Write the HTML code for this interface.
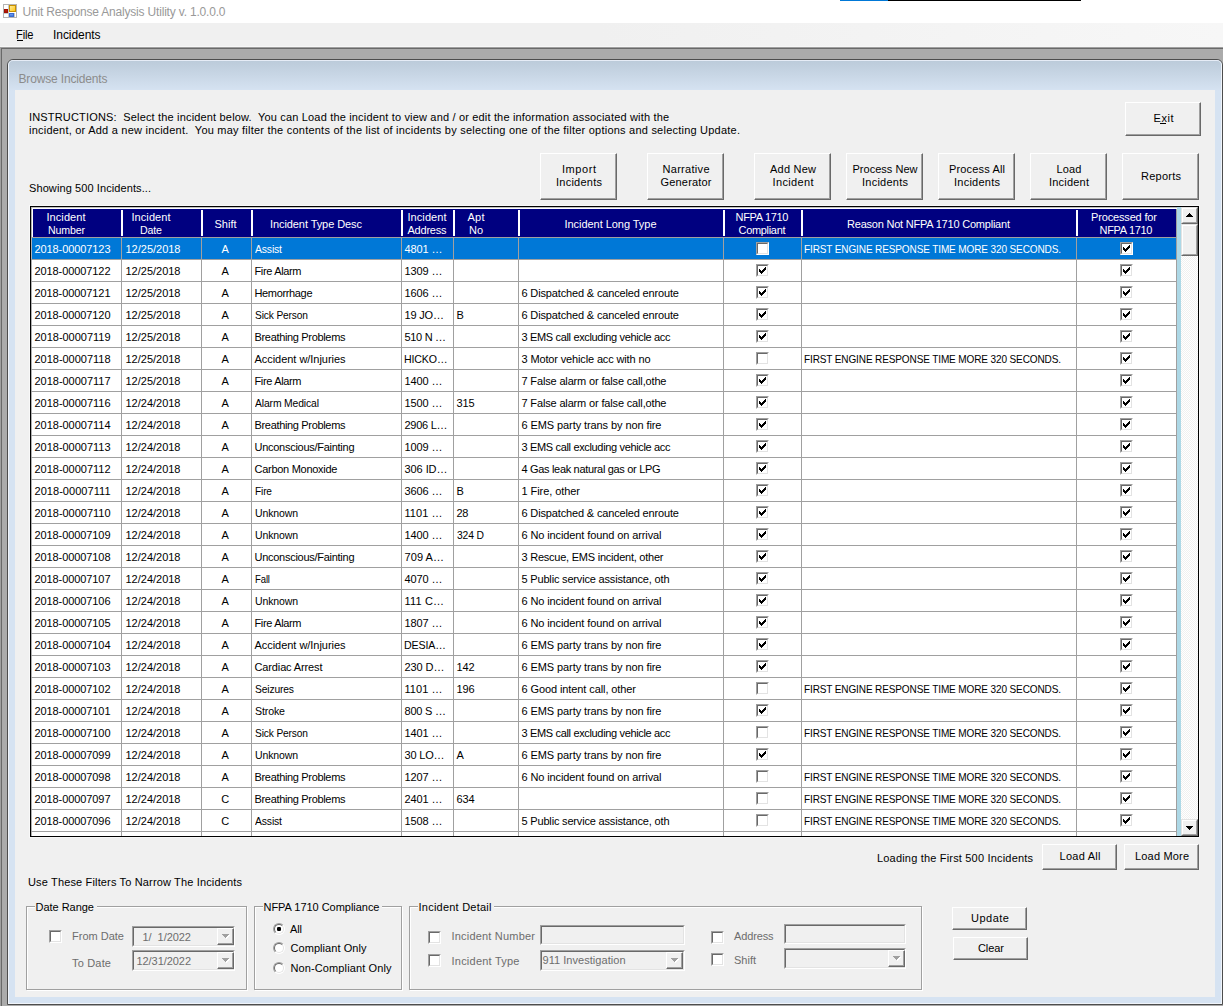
<!DOCTYPE html>
<html><head><meta charset="utf-8"><title>Unit Response Analysis Utility</title><style>
html,body{margin:0;padding:0}
body{width:1223px;height:1006px;position:relative;overflow:hidden;background:#ababab;font-family:"Liberation Sans",sans-serif;font-size:11px}
div,span,i{position:absolute;display:block}
.t{white-space:pre}
.cb{width:13px;height:13px;box-sizing:border-box;background:#fff;border-top:1px solid #a0a0a0;border-left:1px solid #a0a0a0;border-right:1px solid #fff;border-bottom:1px solid #fff}
.cb:before{content:"";position:absolute;left:0;top:0;width:9px;height:9px;border-top:1px solid #696969;border-left:1px solid #696969;border-right:1px solid #e3e3e3;border-bottom:1px solid #e3e3e3}
.ck{left:2px;top:2px;width:7px;height:7px;background:#000;clip-path:polygon(0 2px,1px 2px,1px 3px,2px 3px,2px 4px,3px 4px,3px 3px,4px 3px,4px 2px,5px 2px,5px 1px,6px 1px,6px 0,7px 0,7px 3px,6px 3px,6px 4px,5px 4px,5px 5px,4px 5px,4px 6px,3px 6px,3px 7px,2px 7px,2px 6px,1px 6px,1px 5px,0 5px)}
.rb{width:12px;height:12px;box-sizing:border-box;border-radius:50%;background:#fff;border:1px solid #a0a0a0;border-right-color:#fff;border-bottom-color:#fff}
.rb:before{content:"";position:absolute;left:0;top:0;width:8px;height:8px;border-radius:50%;border:1px solid #696969;border-right-color:#e3e3e3;border-bottom-color:#e3e3e3}
.rb i{left:3px;top:3px;width:4px;height:4px;background:#000;border-radius:1.2px}
</style></head>
<body>
<div style="left:0px;top:0px;width:1223px;height:23px;background:#fff"></div>
<div style="left:840px;top:0px;width:48px;height:1px;background:#0078d7"></div>
<div style="left:888px;top:0px;width:193px;height:1px;background:#000"></div>
<div style="left:3px;top:4px;width:14px;height:14px;background:#fff;border:1px solid #b4b4b4;box-sizing:border-box"></div>
<div style="left:4px;top:9px;width:4px;height:5px;background:linear-gradient(#d02010,#8a0a00);box-shadow:inset 0 0 0 1px #a01000"></div>
<div style="left:9px;top:5px;width:7px;height:7px;background:linear-gradient(135deg,#fff3b0,#ffc000);box-shadow:inset 0 0 0 1px #c89000"></div>
<div style="left:9px;top:13px;width:5px;height:4px;background:linear-gradient(#8ab4f8,#2a62d0);box-shadow:inset 0 0 0 1px #3a6ad0"></div>
<div style="left:8px;top:5px;width:1px;height:12px;background:#c8c8c8"></div>
<div style="left:4px;top:13px;width:5px;height:1px;background:#c8c8c8"></div>
<div style="left:14px;top:13px;width:1px;height:4px;background:#c8c8c8"></div>
<div style="left:0px;top:23px;width:1223px;height:24px;background:#f0f0f0"></div>
<div style="left:0px;top:23px;width:1223px;height:23px;background:linear-gradient(90deg,#f0f0f0 600px,#f7f7f7 1223px)"></div>
<div style="left:0px;top:46px;width:1223px;height:1px;background:#f7f7f7"></div>
<div style="left:17px;top:40px;width:6px;height:1px;background:#000"></div>
<div style="left:0px;top:47px;width:1223px;height:959px;background:#ababab"></div>
<div style="left:0px;top:47px;width:1223px;height:1px;background:#a0a0a0"></div>
<div style="left:0px;top:47px;width:1px;height:959px;background:#a0a0a0"></div>
<div style="left:1px;top:48px;width:1222px;height:1px;background:#696969"></div>
<div style="left:1px;top:48px;width:1px;height:958px;background:#696969"></div>
<div style="left:7px;top:59px;width:1216px;height:946px;box-sizing:border-box;border:1px solid #4d4d4d;border-radius:6px 6px 0 0;background:#d6e3f2;overflow:hidden"><div style="left:0;top:0;width:1214px;height:944px;box-sizing:border-box;border:1px solid #f0f4fa;border-top-color:#e6ecf6;border-radius:5px 5px 0 0;background:linear-gradient(#bccbda 0,#d6e3f2 30px,#d6e3f2 100%)"></div></div>
<div style="left:15px;top:90px;width:1200px;height:907px;background:#f0f0f0"></div>
<div style="left:1125px;top:102px;width:76px;height:34px;box-sizing:border-box;background:#f0f0f0;border-top:1px solid #fff;border-left:1px solid #fff;border-right:1px solid #696969;border-bottom:1px solid #696969"><div style="left:0;top:0;width:73px;height:31px;border-right:1px solid #a0a0a0;border-bottom:1px solid #a0a0a0"></div></div>
<div style="left:1160px;top:123px;width:6px;height:1px;background:#000"></div>
<div style="left:540px;top:153px;width:77px;height:47px;box-sizing:border-box;background:#f0f0f0;border-top:1px solid #fff;border-left:1px solid #fff;border-right:1px solid #696969;border-bottom:1px solid #696969"><div style="left:0;top:0;width:74px;height:44px;border-right:1px solid #a0a0a0;border-bottom:1px solid #a0a0a0"></div></div>
<div style="left:647px;top:153px;width:77px;height:47px;box-sizing:border-box;background:#f0f0f0;border-top:1px solid #fff;border-left:1px solid #fff;border-right:1px solid #696969;border-bottom:1px solid #696969"><div style="left:0;top:0;width:74px;height:44px;border-right:1px solid #a0a0a0;border-bottom:1px solid #a0a0a0"></div></div>
<div style="left:754px;top:153px;width:77px;height:47px;box-sizing:border-box;background:#f0f0f0;border-top:1px solid #fff;border-left:1px solid #fff;border-right:1px solid #696969;border-bottom:1px solid #696969"><div style="left:0;top:0;width:74px;height:44px;border-right:1px solid #a0a0a0;border-bottom:1px solid #a0a0a0"></div></div>
<div style="left:846px;top:153px;width:77px;height:47px;box-sizing:border-box;background:#f0f0f0;border-top:1px solid #fff;border-left:1px solid #fff;border-right:1px solid #696969;border-bottom:1px solid #696969"><div style="left:0;top:0;width:74px;height:44px;border-right:1px solid #a0a0a0;border-bottom:1px solid #a0a0a0"></div></div>
<div style="left:938px;top:153px;width:77px;height:47px;box-sizing:border-box;background:#f0f0f0;border-top:1px solid #fff;border-left:1px solid #fff;border-right:1px solid #696969;border-bottom:1px solid #696969"><div style="left:0;top:0;width:74px;height:44px;border-right:1px solid #a0a0a0;border-bottom:1px solid #a0a0a0"></div></div>
<div style="left:1030px;top:153px;width:77px;height:47px;box-sizing:border-box;background:#f0f0f0;border-top:1px solid #fff;border-left:1px solid #fff;border-right:1px solid #696969;border-bottom:1px solid #696969"><div style="left:0;top:0;width:74px;height:44px;border-right:1px solid #a0a0a0;border-bottom:1px solid #a0a0a0"></div></div>
<div style="left:1122px;top:153px;width:77px;height:47px;box-sizing:border-box;background:#f0f0f0;border-top:1px solid #fff;border-left:1px solid #fff;border-right:1px solid #696969;border-bottom:1px solid #696969"><div style="left:0;top:0;width:74px;height:44px;border-right:1px solid #a0a0a0;border-bottom:1px solid #a0a0a0"></div></div>
<div style="left:29px;top:205px;width:1171px;height:633px;background:#f8f8f8"></div>
<div style="left:30px;top:206px;width:1169px;height:631px;background:#000"></div>
<div style="left:31px;top:207px;width:1167px;height:629px;background:#add8e6"></div>
<div style="left:31px;top:207px;width:1146px;height:629px;background:#fff"></div>
<div style="left:31px;top:207px;width:1146px;height:1px;background:#c0c0c0"></div>
<div style="left:31px;top:207px;width:1px;height:629px;background:#b0b0b0"></div>
<div style="left:33px;top:209px;width:1143px;height:28px;background:#000080"></div>
<div style="left:1176px;top:209px;width:1px;height:627px;background:#a0a0a0"></div>
<div style="left:121px;top:210px;width:2px;height:26px;background:#fff"></div>
<div style="left:201px;top:210px;width:2px;height:26px;background:#fff"></div>
<div style="left:251px;top:210px;width:2px;height:26px;background:#fff"></div>
<div style="left:401px;top:210px;width:2px;height:26px;background:#fff"></div>
<div style="left:453px;top:210px;width:2px;height:26px;background:#fff"></div>
<div style="left:518px;top:210px;width:2px;height:26px;background:#fff"></div>
<div style="left:723px;top:210px;width:2px;height:26px;background:#fff"></div>
<div style="left:801px;top:210px;width:2px;height:26px;background:#fff"></div>
<div style="left:1076px;top:210px;width:2px;height:26px;background:#fff"></div>
<div style="left:32px;top:238px;width:1144px;height:21px;background:#0078d7"></div>
<div style="left:31px;top:259px;width:1145px;height:1px;background:#a0a0a0"></div>
<div class="cb" style="left:756px;top:242px"></div>
<div class="cb" style="left:1120px;top:242px"><i class="ck"></i></div>
<div style="left:31px;top:281px;width:1145px;height:1px;background:#a0a0a0"></div>
<div class="cb" style="left:756px;top:264px"><i class="ck"></i></div>
<div class="cb" style="left:1120px;top:264px"><i class="ck"></i></div>
<div style="left:31px;top:303px;width:1145px;height:1px;background:#a0a0a0"></div>
<div class="cb" style="left:756px;top:286px"><i class="ck"></i></div>
<div class="cb" style="left:1120px;top:286px"><i class="ck"></i></div>
<div style="left:31px;top:325px;width:1145px;height:1px;background:#a0a0a0"></div>
<div class="cb" style="left:756px;top:308px"><i class="ck"></i></div>
<div class="cb" style="left:1120px;top:308px"><i class="ck"></i></div>
<div style="left:31px;top:347px;width:1145px;height:1px;background:#a0a0a0"></div>
<div class="cb" style="left:756px;top:330px"><i class="ck"></i></div>
<div class="cb" style="left:1120px;top:330px"><i class="ck"></i></div>
<div style="left:31px;top:369px;width:1145px;height:1px;background:#a0a0a0"></div>
<div class="cb" style="left:756px;top:352px"></div>
<div class="cb" style="left:1120px;top:352px"><i class="ck"></i></div>
<div style="left:31px;top:391px;width:1145px;height:1px;background:#a0a0a0"></div>
<div class="cb" style="left:756px;top:374px"><i class="ck"></i></div>
<div class="cb" style="left:1120px;top:374px"><i class="ck"></i></div>
<div style="left:31px;top:413px;width:1145px;height:1px;background:#a0a0a0"></div>
<div class="cb" style="left:756px;top:396px"><i class="ck"></i></div>
<div class="cb" style="left:1120px;top:396px"><i class="ck"></i></div>
<div style="left:31px;top:435px;width:1145px;height:1px;background:#a0a0a0"></div>
<div class="cb" style="left:756px;top:418px"><i class="ck"></i></div>
<div class="cb" style="left:1120px;top:418px"><i class="ck"></i></div>
<div style="left:31px;top:457px;width:1145px;height:1px;background:#a0a0a0"></div>
<div class="cb" style="left:756px;top:440px"><i class="ck"></i></div>
<div class="cb" style="left:1120px;top:440px"><i class="ck"></i></div>
<div style="left:31px;top:479px;width:1145px;height:1px;background:#a0a0a0"></div>
<div class="cb" style="left:756px;top:462px"><i class="ck"></i></div>
<div class="cb" style="left:1120px;top:462px"><i class="ck"></i></div>
<div style="left:31px;top:501px;width:1145px;height:1px;background:#a0a0a0"></div>
<div class="cb" style="left:756px;top:484px"><i class="ck"></i></div>
<div class="cb" style="left:1120px;top:484px"><i class="ck"></i></div>
<div style="left:31px;top:523px;width:1145px;height:1px;background:#a0a0a0"></div>
<div class="cb" style="left:756px;top:506px"><i class="ck"></i></div>
<div class="cb" style="left:1120px;top:506px"><i class="ck"></i></div>
<div style="left:31px;top:545px;width:1145px;height:1px;background:#a0a0a0"></div>
<div class="cb" style="left:756px;top:528px"><i class="ck"></i></div>
<div class="cb" style="left:1120px;top:528px"><i class="ck"></i></div>
<div style="left:31px;top:567px;width:1145px;height:1px;background:#a0a0a0"></div>
<div class="cb" style="left:756px;top:550px"><i class="ck"></i></div>
<div class="cb" style="left:1120px;top:550px"><i class="ck"></i></div>
<div style="left:31px;top:589px;width:1145px;height:1px;background:#a0a0a0"></div>
<div class="cb" style="left:756px;top:572px"><i class="ck"></i></div>
<div class="cb" style="left:1120px;top:572px"><i class="ck"></i></div>
<div style="left:31px;top:611px;width:1145px;height:1px;background:#a0a0a0"></div>
<div class="cb" style="left:756px;top:594px"><i class="ck"></i></div>
<div class="cb" style="left:1120px;top:594px"><i class="ck"></i></div>
<div style="left:31px;top:633px;width:1145px;height:1px;background:#a0a0a0"></div>
<div class="cb" style="left:756px;top:616px"><i class="ck"></i></div>
<div class="cb" style="left:1120px;top:616px"><i class="ck"></i></div>
<div style="left:31px;top:655px;width:1145px;height:1px;background:#a0a0a0"></div>
<div class="cb" style="left:756px;top:638px"><i class="ck"></i></div>
<div class="cb" style="left:1120px;top:638px"><i class="ck"></i></div>
<div style="left:31px;top:677px;width:1145px;height:1px;background:#a0a0a0"></div>
<div class="cb" style="left:756px;top:660px"><i class="ck"></i></div>
<div class="cb" style="left:1120px;top:660px"><i class="ck"></i></div>
<div style="left:31px;top:699px;width:1145px;height:1px;background:#a0a0a0"></div>
<div class="cb" style="left:756px;top:682px"></div>
<div class="cb" style="left:1120px;top:682px"><i class="ck"></i></div>
<div style="left:31px;top:721px;width:1145px;height:1px;background:#a0a0a0"></div>
<div class="cb" style="left:756px;top:704px"><i class="ck"></i></div>
<div class="cb" style="left:1120px;top:704px"><i class="ck"></i></div>
<div style="left:31px;top:743px;width:1145px;height:1px;background:#a0a0a0"></div>
<div class="cb" style="left:756px;top:726px"></div>
<div class="cb" style="left:1120px;top:726px"><i class="ck"></i></div>
<div style="left:31px;top:765px;width:1145px;height:1px;background:#a0a0a0"></div>
<div class="cb" style="left:756px;top:748px"><i class="ck"></i></div>
<div class="cb" style="left:1120px;top:748px"><i class="ck"></i></div>
<div style="left:31px;top:787px;width:1145px;height:1px;background:#a0a0a0"></div>
<div class="cb" style="left:756px;top:770px"></div>
<div class="cb" style="left:1120px;top:770px"><i class="ck"></i></div>
<div style="left:31px;top:809px;width:1145px;height:1px;background:#a0a0a0"></div>
<div class="cb" style="left:756px;top:792px"></div>
<div class="cb" style="left:1120px;top:792px"><i class="ck"></i></div>
<div style="left:31px;top:831px;width:1145px;height:1px;background:#a0a0a0"></div>
<div class="cb" style="left:756px;top:814px"></div>
<div class="cb" style="left:1120px;top:814px"><i class="ck"></i></div>
<div style="left:31px;top:237px;width:1145px;height:1px;background:#a0a0a0"></div>
<div style="left:121px;top:237px;width:1px;height:599px;background:#a0a0a0"></div>
<div style="left:201px;top:237px;width:1px;height:599px;background:#a0a0a0"></div>
<div style="left:251px;top:237px;width:1px;height:599px;background:#a0a0a0"></div>
<div style="left:401px;top:237px;width:1px;height:599px;background:#a0a0a0"></div>
<div style="left:453px;top:237px;width:1px;height:599px;background:#a0a0a0"></div>
<div style="left:518px;top:237px;width:1px;height:599px;background:#a0a0a0"></div>
<div style="left:723px;top:237px;width:1px;height:599px;background:#a0a0a0"></div>
<div style="left:801px;top:237px;width:1px;height:599px;background:#a0a0a0"></div>
<div style="left:1076px;top:237px;width:1px;height:599px;background:#a0a0a0"></div>
<div style="left:1181px;top:207px;width:17px;height:629px;background:repeating-conic-gradient(#fff 0 25%,#f0f0f0 0 50%) 0 0/2px 2px"></div>
<div style="left:1181px;top:207px;width:17px;height:17px;box-sizing:border-box;background:#f0f0f0;border-top:1px solid #e3e3e3;border-left:1px solid #e3e3e3;border-right:1px solid #696969;border-bottom:1px solid #696969"><div style="left:0;top:0;width:13px;height:13px;border-top:1px solid #fff;border-left:1px solid #fff;border-right:1px solid #a0a0a0;border-bottom:1px solid #a0a0a0"></div></div>
<div style="left:1181px;top:224px;width:17px;height:32px;box-sizing:border-box;background:#f0f0f0;border-top:1px solid #e3e3e3;border-left:1px solid #e3e3e3;border-right:1px solid #696969;border-bottom:1px solid #696969"><div style="left:0;top:0;width:13px;height:28px;border-top:1px solid #fff;border-left:1px solid #fff;border-right:1px solid #a0a0a0;border-bottom:1px solid #a0a0a0"></div></div>
<div style="left:1181px;top:819px;width:17px;height:17px;box-sizing:border-box;background:#f0f0f0;border-top:1px solid #e3e3e3;border-left:1px solid #e3e3e3;border-right:1px solid #696969;border-bottom:1px solid #696969"><div style="left:0;top:0;width:13px;height:13px;border-top:1px solid #fff;border-left:1px solid #fff;border-right:1px solid #a0a0a0;border-bottom:1px solid #a0a0a0"></div></div>
<div style="left:1189px;top:213px;width:1px;height:1px;background:#000"></div>
<div style="left:1188px;top:214px;width:3px;height:1px;background:#000"></div>
<div style="left:1187px;top:215px;width:5px;height:1px;background:#000"></div>
<div style="left:1186px;top:216px;width:7px;height:1px;background:#000"></div>
<div style="left:1186px;top:826px;width:7px;height:1px;background:#000"></div>
<div style="left:1187px;top:827px;width:5px;height:1px;background:#000"></div>
<div style="left:1188px;top:828px;width:3px;height:1px;background:#000"></div>
<div style="left:1189px;top:829px;width:1px;height:1px;background:#000"></div>
<div style="left:1042px;top:844px;width:75px;height:26px;box-sizing:border-box;background:#f0f0f0;border-top:1px solid #fff;border-left:1px solid #fff;border-right:1px solid #696969;border-bottom:1px solid #696969"><div style="left:0;top:0;width:72px;height:23px;border-right:1px solid #a0a0a0;border-bottom:1px solid #a0a0a0"></div></div>
<div style="left:1124px;top:844px;width:75px;height:26px;box-sizing:border-box;background:#f0f0f0;border-top:1px solid #fff;border-left:1px solid #fff;border-right:1px solid #696969;border-bottom:1px solid #696969"><div style="left:0;top:0;width:72px;height:23px;border-right:1px solid #a0a0a0;border-bottom:1px solid #a0a0a0"></div></div>
<div style="left:27px;top:907px;width:221px;height:84px;box-sizing:border-box;border:1px solid #fff"></div>
<div style="left:26px;top:906px;width:221px;height:84px;box-sizing:border-box;border:1px solid #a0a0a0"></div>
<div style="left:35px;top:906px;width:61.5px;height:2px;background:#f0f0f0"></div>
<div style="left:255px;top:907px;width:148px;height:84px;box-sizing:border-box;border:1px solid #fff"></div>
<div style="left:254px;top:906px;width:148px;height:84px;box-sizing:border-box;border:1px solid #a0a0a0"></div>
<div style="left:263px;top:906px;width:119px;height:2px;background:#f0f0f0"></div>
<div style="left:410px;top:907px;width:513px;height:84px;box-sizing:border-box;border:1px solid #fff"></div>
<div style="left:409px;top:906px;width:513px;height:84px;box-sizing:border-box;border:1px solid #a0a0a0"></div>
<div style="left:418px;top:906px;width:76px;height:2px;background:#f0f0f0"></div>
<div class="cb" style="left:49px;top:930px"></div>
<div style="left:132px;top:926px;width:103px;height:21px;box-sizing:border-box;background:#f0f0f0;border-top:1px solid #a0a0a0;border-left:1px solid #a0a0a0;border-right:1px solid #fff;border-bottom:1px solid #fff"><div style="left:0;top:0;width:99px;height:17px;border-top:1px solid #696969;border-left:1px solid #696969;border-right:1px solid #e3e3e3;border-bottom:1px solid #e3e3e3"></div></div>
<div style="left:217px;top:928px;width:17px;height:17px;box-sizing:border-box;background:#f0f0f0;border-top:1px solid #fff;border-left:1px solid #fff;border-right:1px solid #696969;border-bottom:1px solid #696969"><div style="left:0;top:0;width:14px;height:14px;border-right:1px solid #a0a0a0;border-bottom:1px solid #a0a0a0"></div></div>
<div style="left:223px;top:935px;width:7px;height:1px;background:#fff"></div>
<div style="left:224px;top:936px;width:5px;height:1px;background:#fff"></div>
<div style="left:225px;top:937px;width:3px;height:1px;background:#fff"></div>
<div style="left:226px;top:938px;width:1px;height:1px;background:#fff"></div>
<div style="left:222px;top:934px;width:7px;height:1px;background:#a0a0a0"></div>
<div style="left:223px;top:935px;width:5px;height:1px;background:#a0a0a0"></div>
<div style="left:224px;top:936px;width:3px;height:1px;background:#a0a0a0"></div>
<div style="left:225px;top:937px;width:1px;height:1px;background:#a0a0a0"></div>
<div style="left:132px;top:950px;width:103px;height:21px;box-sizing:border-box;background:#f0f0f0;border-top:1px solid #a0a0a0;border-left:1px solid #a0a0a0;border-right:1px solid #fff;border-bottom:1px solid #fff"><div style="left:0;top:0;width:99px;height:17px;border-top:1px solid #696969;border-left:1px solid #696969;border-right:1px solid #e3e3e3;border-bottom:1px solid #e3e3e3"></div></div>
<div style="left:217px;top:952px;width:17px;height:17px;box-sizing:border-box;background:#f0f0f0;border-top:1px solid #fff;border-left:1px solid #fff;border-right:1px solid #696969;border-bottom:1px solid #696969"><div style="left:0;top:0;width:14px;height:14px;border-right:1px solid #a0a0a0;border-bottom:1px solid #a0a0a0"></div></div>
<div style="left:223px;top:959px;width:7px;height:1px;background:#fff"></div>
<div style="left:224px;top:960px;width:5px;height:1px;background:#fff"></div>
<div style="left:225px;top:961px;width:3px;height:1px;background:#fff"></div>
<div style="left:226px;top:962px;width:1px;height:1px;background:#fff"></div>
<div style="left:222px;top:958px;width:7px;height:1px;background:#a0a0a0"></div>
<div style="left:223px;top:959px;width:5px;height:1px;background:#a0a0a0"></div>
<div style="left:224px;top:960px;width:3px;height:1px;background:#a0a0a0"></div>
<div style="left:225px;top:961px;width:1px;height:1px;background:#a0a0a0"></div>
<div class="rb" style="left:273px;top:923px"><i></i></div>
<div class="rb" style="left:273px;top:942px"></div>
<div class="rb" style="left:273px;top:962px"></div>
<div class="cb" style="left:428px;top:931px"></div>
<div style="left:540px;top:925px;width:145px;height:20px;box-sizing:border-box;background:#f0f0f0;border-top:1px solid #a0a0a0;border-left:1px solid #a0a0a0;border-right:1px solid #fff;border-bottom:1px solid #fff"><div style="left:0;top:0;width:141px;height:16px;border-top:1px solid #696969;border-left:1px solid #696969;border-right:1px solid #e3e3e3;border-bottom:1px solid #e3e3e3"></div></div>
<div class="cb" style="left:428px;top:954px"></div>
<div style="left:540px;top:950px;width:145px;height:21px;box-sizing:border-box;background:#f0f0f0;border-top:1px solid #a0a0a0;border-left:1px solid #a0a0a0;border-right:1px solid #fff;border-bottom:1px solid #fff"><div style="left:0;top:0;width:141px;height:17px;border-top:1px solid #696969;border-left:1px solid #696969;border-right:1px solid #e3e3e3;border-bottom:1px solid #e3e3e3"></div></div>
<div style="left:666px;top:952px;width:17px;height:17px;box-sizing:border-box;background:#f0f0f0;border-top:1px solid #fff;border-left:1px solid #fff;border-right:1px solid #696969;border-bottom:1px solid #696969"><div style="left:0;top:0;width:14px;height:14px;border-right:1px solid #a0a0a0;border-bottom:1px solid #a0a0a0"></div></div>
<div style="left:672px;top:959px;width:7px;height:1px;background:#fff"></div>
<div style="left:673px;top:960px;width:5px;height:1px;background:#fff"></div>
<div style="left:674px;top:961px;width:3px;height:1px;background:#fff"></div>
<div style="left:675px;top:962px;width:1px;height:1px;background:#fff"></div>
<div style="left:671px;top:958px;width:7px;height:1px;background:#a0a0a0"></div>
<div style="left:672px;top:959px;width:5px;height:1px;background:#a0a0a0"></div>
<div style="left:673px;top:960px;width:3px;height:1px;background:#a0a0a0"></div>
<div style="left:674px;top:961px;width:1px;height:1px;background:#a0a0a0"></div>
<div class="cb" style="left:711px;top:931px"></div>
<div style="left:784px;top:924px;width:122px;height:20px;box-sizing:border-box;background:#f0f0f0;border-top:1px solid #a0a0a0;border-left:1px solid #a0a0a0;border-right:1px solid #fff;border-bottom:1px solid #fff"><div style="left:0;top:0;width:118px;height:16px;border-top:1px solid #696969;border-left:1px solid #696969;border-right:1px solid #e3e3e3;border-bottom:1px solid #e3e3e3"></div></div>
<div class="cb" style="left:711px;top:953px"></div>
<div style="left:784px;top:948px;width:122px;height:21px;box-sizing:border-box;background:#f0f0f0;border-top:1px solid #a0a0a0;border-left:1px solid #a0a0a0;border-right:1px solid #fff;border-bottom:1px solid #fff"><div style="left:0;top:0;width:118px;height:17px;border-top:1px solid #696969;border-left:1px solid #696969;border-right:1px solid #e3e3e3;border-bottom:1px solid #e3e3e3"></div></div>
<div style="left:888px;top:950px;width:17px;height:17px;box-sizing:border-box;background:#f0f0f0;border-top:1px solid #fff;border-left:1px solid #fff;border-right:1px solid #696969;border-bottom:1px solid #696969"><div style="left:0;top:0;width:14px;height:14px;border-right:1px solid #a0a0a0;border-bottom:1px solid #a0a0a0"></div></div>
<div style="left:894px;top:957px;width:7px;height:1px;background:#fff"></div>
<div style="left:895px;top:958px;width:5px;height:1px;background:#fff"></div>
<div style="left:896px;top:959px;width:3px;height:1px;background:#fff"></div>
<div style="left:897px;top:960px;width:1px;height:1px;background:#fff"></div>
<div style="left:893px;top:956px;width:7px;height:1px;background:#a0a0a0"></div>
<div style="left:894px;top:957px;width:5px;height:1px;background:#a0a0a0"></div>
<div style="left:895px;top:958px;width:3px;height:1px;background:#a0a0a0"></div>
<div style="left:896px;top:959px;width:1px;height:1px;background:#a0a0a0"></div>
<div style="left:952px;top:907px;width:75px;height:23px;box-sizing:border-box;background:#f0f0f0;border-top:1px solid #fff;border-left:1px solid #fff;border-right:1px solid #696969;border-bottom:1px solid #696969"><div style="left:0;top:0;width:72px;height:20px;border-right:1px solid #a0a0a0;border-bottom:1px solid #a0a0a0"></div></div>
<div style="left:953px;top:937px;width:75px;height:23px;box-sizing:border-box;background:#f0f0f0;border-top:1px solid #fff;border-left:1px solid #fff;border-right:1px solid #696969;border-bottom:1px solid #696969"><div style="left:0;top:0;width:72px;height:20px;border-right:1px solid #a0a0a0;border-bottom:1px solid #a0a0a0"></div></div>
<span class="t" style="left:22.50px;top:5px;font-size:12px;line-height:15px;color:#999;letter-spacing:-0.189px;">Unit Response Analysis Utility v. 1.0.0.0</span>
<span class="t" style="left:16.00px;top:28px;font-size:12px;line-height:15px;color:#000;letter-spacing:-0.150px;transform:scaleX(0.9262);transform-origin:0 0;">File</span>
<span class="t" style="left:53.00px;top:28px;font-size:12px;line-height:15px;color:#000;letter-spacing:-0.066px;">Incidents</span>
<span class="t" style="left:18.50px;top:72px;font-size:12px;line-height:15px;color:#8c8c8c;letter-spacing:-0.159px;">Browse Incidents</span>
<span class="t" style="left:29.00px;top:111px;font-size:11px;line-height:13px;color:#000;letter-spacing:0.170px;">INSTRUCTIONS:  Select the incident below.  You can Load the incident to view and / or edit the information associated with the</span>
<span class="t" style="left:29.00px;top:124px;font-size:11px;line-height:13px;color:#000;letter-spacing:0.225px;">incident, or Add a new incident.  You may filter the contents of the list of incidents by selecting one of the filter options and selecting Update.</span>
<span class="t" style="left:29.00px;top:182px;font-size:11px;line-height:13px;color:#000;letter-spacing:0.093px;">Showing 500 Incidents...</span>
<span class="t" style="left:1153.50px;top:112px;font-size:11px;line-height:13px;color:#000;letter-spacing:0.552px;">Exit</span>
<span class="t" style="left:562.00px;top:163px;font-size:11px;line-height:13px;color:#000;letter-spacing:0.562px;">Import</span>
<span class="t" style="left:556.00px;top:176px;font-size:11px;line-height:13px;color:#000;letter-spacing:0.246px;">Incidents</span>
<span class="t" style="left:662.50px;top:163px;font-size:11px;line-height:13px;color:#000;letter-spacing:0.297px;">Narrative</span>
<span class="t" style="left:660.50px;top:176px;font-size:11px;line-height:13px;color:#000;letter-spacing:0.184px;">Generator</span>
<span class="t" style="left:770.00px;top:163px;font-size:11px;line-height:13px;color:#000;letter-spacing:0.227px;">Add New</span>
<span class="t" style="left:772.50px;top:176px;font-size:11px;line-height:13px;color:#000;letter-spacing:0.353px;">Incident</span>
<span class="t" style="left:852.50px;top:163px;font-size:11px;line-height:13px;color:#000;letter-spacing:0.020px;">Process New</span>
<span class="t" style="left:862.00px;top:176px;font-size:11px;line-height:13px;color:#000;letter-spacing:0.246px;">Incidents</span>
<span class="t" style="left:949.00px;top:163px;font-size:11px;line-height:13px;color:#000;letter-spacing:0.158px;">Process All</span>
<span class="t" style="left:954.00px;top:176px;font-size:11px;line-height:13px;color:#000;letter-spacing:0.246px;">Incidents</span>
<span class="t" style="left:1056.50px;top:163px;font-size:11px;line-height:13px;color:#000;letter-spacing:0.172px;">Load</span>
<span class="t" style="left:1049.00px;top:176px;font-size:11px;line-height:13px;color:#000;letter-spacing:0.210px;">Incident</span>
<span class="t" style="left:1141.00px;top:170px;font-size:11px;line-height:13px;color:#000;letter-spacing:0.245px;">Reports</span>
<span class="t" style="left:46.50px;top:211px;font-size:11px;line-height:13px;color:#fff;letter-spacing:0.067px;">Incident</span>
<span class="t" style="left:47.50px;top:224px;font-size:11px;line-height:13px;color:#fff;letter-spacing:-0.150px;transform:scaleX(0.9642);transform-origin:0 0;">Number</span>
<span class="t" style="left:131.50px;top:211px;font-size:11px;line-height:13px;color:#fff;letter-spacing:0.067px;">Incident</span>
<span class="t" style="left:140.00px;top:224px;font-size:11px;line-height:13px;color:#fff;letter-spacing:-0.150px;transform:scaleX(0.9649);transform-origin:0 0;">Date</span>
<span class="t" style="left:214.50px;top:218px;font-size:11px;line-height:13px;color:#fff;">Shift</span>
<span class="t" style="left:270.00px;top:218px;font-size:11px;line-height:13px;color:#fff;letter-spacing:-0.080px;">Incident Type Desc</span>
<span class="t" style="left:407.50px;top:211px;font-size:11px;line-height:13px;color:#fff;letter-spacing:0.067px;">Incident</span>
<span class="t" style="left:407.50px;top:224px;font-size:11px;line-height:13px;color:#fff;letter-spacing:-0.227px;">Address</span>
<span class="t" style="left:467.50px;top:211px;font-size:11px;line-height:13px;color:#fff;letter-spacing:0.242px;">Apt</span>
<span class="t" style="left:469.00px;top:224px;font-size:11px;line-height:13px;color:#fff;letter-spacing:-0.062px;">No</span>
<span class="t" style="left:564.50px;top:218px;font-size:11px;line-height:13px;color:#fff;letter-spacing:-0.045px;">Incident Long Type</span>
<span class="t" style="left:735.50px;top:211px;font-size:11px;line-height:13px;color:#fff;letter-spacing:-0.307px;">NFPA 1710</span>
<span class="t" style="left:738.50px;top:224px;font-size:11px;line-height:13px;color:#fff;letter-spacing:-0.316px;">Compliant</span>
<span class="t" style="left:847.00px;top:218px;font-size:11px;line-height:13px;color:#fff;letter-spacing:-0.213px;">Reason Not NFPA 1710 Compliant</span>
<span class="t" style="left:1091.00px;top:211px;font-size:11px;line-height:13px;color:#fff;letter-spacing:-0.156px;">Processed for</span>
<span class="t" style="left:1099.50px;top:224px;font-size:11px;line-height:13px;color:#fff;letter-spacing:-0.307px;">NFPA 1710</span>
<span class="t" style="left:34.50px;top:243px;font-size:11px;line-height:13px;color:#fff;letter-spacing:-0.090px;">2018-00007123</span>
<span class="t" style="left:125.50px;top:243px;font-size:11px;line-height:13px;color:#fff;letter-spacing:-0.007px;">12/25/2018</span>
<span class="t" style="left:221.53px;top:243px;font-size:11px;line-height:13px;color:#fff;">A</span>
<span class="t" style="left:254.50px;top:243px;font-size:11px;line-height:13px;color:#fff;letter-spacing:-0.150px;transform:scaleX(0.9443);transform-origin:0 0;">Assist</span>
<span class="t" style="left:404.50px;top:243px;font-size:11px;line-height:13px;color:#fff;letter-spacing:-0.106px;">4801 …</span>
<span class="t" style="left:804.00px;top:243px;font-size:11px;line-height:13px;color:#fff;letter-spacing:-0.150px;transform:scaleX(0.9124);transform-origin:0 0;">FIRST ENGINE RESPONSE TIME MORE 320 SECONDS.</span>
<span class="t" style="left:34.50px;top:265px;font-size:11px;line-height:13px;color:#000;letter-spacing:-0.090px;">2018-00007122</span>
<span class="t" style="left:125.50px;top:265px;font-size:11px;line-height:13px;color:#000;letter-spacing:-0.007px;">12/25/2018</span>
<span class="t" style="left:221.53px;top:265px;font-size:11px;line-height:13px;color:#000;">A</span>
<span class="t" style="left:254.50px;top:265px;font-size:11px;line-height:13px;color:#000;letter-spacing:-0.347px;">Fire Alarm</span>
<span class="t" style="left:404.50px;top:265px;font-size:11px;line-height:13px;color:#000;letter-spacing:-0.106px;">1309 …</span>
<span class="t" style="left:34.50px;top:287px;font-size:11px;line-height:13px;color:#000;letter-spacing:-0.090px;">2018-00007121</span>
<span class="t" style="left:125.50px;top:287px;font-size:11px;line-height:13px;color:#000;letter-spacing:-0.007px;">12/25/2018</span>
<span class="t" style="left:221.53px;top:287px;font-size:11px;line-height:13px;color:#000;">A</span>
<span class="t" style="left:254.50px;top:287px;font-size:11px;line-height:13px;color:#000;letter-spacing:-0.349px;">Hemorrhage</span>
<span class="t" style="left:404.50px;top:287px;font-size:11px;line-height:13px;color:#000;letter-spacing:-0.106px;">1606 …</span>
<span class="t" style="left:521.50px;top:287px;font-size:11px;line-height:13px;color:#000;letter-spacing:-0.152px;">6 Dispatched &amp; canceled enroute</span>
<span class="t" style="left:34.50px;top:309px;font-size:11px;line-height:13px;color:#000;letter-spacing:-0.090px;">2018-00007120</span>
<span class="t" style="left:125.50px;top:309px;font-size:11px;line-height:13px;color:#000;letter-spacing:-0.007px;">12/25/2018</span>
<span class="t" style="left:221.53px;top:309px;font-size:11px;line-height:13px;color:#000;">A</span>
<span class="t" style="left:254.50px;top:309px;font-size:11px;line-height:13px;color:#000;letter-spacing:-0.150px;transform:scaleX(0.9265);transform-origin:0 0;">Sick Person</span>
<span class="t" style="left:404.50px;top:309px;font-size:11px;line-height:13px;color:#000;letter-spacing:-0.172px;">19 JO…</span>
<span class="t" style="left:456.50px;top:309px;font-size:11px;line-height:13px;color:#000;">B</span>
<span class="t" style="left:521.50px;top:309px;font-size:11px;line-height:13px;color:#000;letter-spacing:-0.152px;">6 Dispatched &amp; canceled enroute</span>
<span class="t" style="left:34.50px;top:331px;font-size:11px;line-height:13px;color:#000;letter-spacing:-0.022px;">2018-00007119</span>
<span class="t" style="left:125.50px;top:331px;font-size:11px;line-height:13px;color:#000;letter-spacing:-0.007px;">12/25/2018</span>
<span class="t" style="left:221.53px;top:331px;font-size:11px;line-height:13px;color:#000;">A</span>
<span class="t" style="left:254.50px;top:331px;font-size:11px;line-height:13px;color:#000;letter-spacing:-0.330px;">Breathing Problems</span>
<span class="t" style="left:404.50px;top:331px;font-size:11px;line-height:13px;color:#000;letter-spacing:-0.320px;">510 N …</span>
<span class="t" style="left:521.50px;top:331px;font-size:11px;line-height:13px;color:#000;letter-spacing:-0.341px;">3 EMS call excluding vehicle acc</span>
<span class="t" style="left:34.50px;top:353px;font-size:11px;line-height:13px;color:#000;letter-spacing:-0.022px;">2018-00007118</span>
<span class="t" style="left:125.50px;top:353px;font-size:11px;line-height:13px;color:#000;letter-spacing:-0.007px;">12/25/2018</span>
<span class="t" style="left:221.53px;top:353px;font-size:11px;line-height:13px;color:#000;">A</span>
<span class="t" style="left:254.50px;top:353px;font-size:11px;line-height:13px;color:#000;letter-spacing:-0.040px;">Accident w/Injuries</span>
<span class="t" style="left:404.00px;top:353px;font-size:11px;line-height:13px;color:#000;letter-spacing:-0.150px;transform:scaleX(0.9647);transform-origin:0 0;">HICKO…</span>
<span class="t" style="left:521.50px;top:353px;font-size:11px;line-height:13px;color:#000;letter-spacing:-0.141px;">3 Motor vehicle acc with no</span>
<span class="t" style="left:804.00px;top:353px;font-size:11px;line-height:13px;color:#000;letter-spacing:-0.150px;transform:scaleX(0.9124);transform-origin:0 0;">FIRST ENGINE RESPONSE TIME MORE 320 SECONDS.</span>
<span class="t" style="left:34.50px;top:375px;font-size:11px;line-height:13px;color:#000;letter-spacing:-0.022px;">2018-00007117</span>
<span class="t" style="left:125.50px;top:375px;font-size:11px;line-height:13px;color:#000;letter-spacing:-0.007px;">12/25/2018</span>
<span class="t" style="left:221.53px;top:375px;font-size:11px;line-height:13px;color:#000;">A</span>
<span class="t" style="left:254.50px;top:375px;font-size:11px;line-height:13px;color:#000;letter-spacing:-0.347px;">Fire Alarm</span>
<span class="t" style="left:404.50px;top:375px;font-size:11px;line-height:13px;color:#000;letter-spacing:-0.106px;">1400 …</span>
<span class="t" style="left:521.50px;top:375px;font-size:11px;line-height:13px;color:#000;letter-spacing:-0.155px;">7 False alarm or false call,othe</span>
<span class="t" style="left:34.50px;top:397px;font-size:11px;line-height:13px;color:#000;letter-spacing:-0.022px;">2018-00007116</span>
<span class="t" style="left:125.50px;top:397px;font-size:11px;line-height:13px;color:#000;letter-spacing:-0.007px;">12/24/2018</span>
<span class="t" style="left:221.53px;top:397px;font-size:11px;line-height:13px;color:#000;">A</span>
<span class="t" style="left:254.50px;top:397px;font-size:11px;line-height:13px;color:#000;letter-spacing:-0.150px;transform:scaleX(0.9427);transform-origin:0 0;">Alarm Medical</span>
<span class="t" style="left:404.50px;top:397px;font-size:11px;line-height:13px;color:#000;letter-spacing:-0.106px;">1500 …</span>
<span class="t" style="left:456.50px;top:397px;font-size:11px;line-height:13px;color:#000;letter-spacing:-0.180px;">315</span>
<span class="t" style="left:521.50px;top:397px;font-size:11px;line-height:13px;color:#000;letter-spacing:-0.155px;">7 False alarm or false call,othe</span>
<span class="t" style="left:34.50px;top:419px;font-size:11px;line-height:13px;color:#000;letter-spacing:-0.022px;">2018-00007114</span>
<span class="t" style="left:125.50px;top:419px;font-size:11px;line-height:13px;color:#000;letter-spacing:-0.007px;">12/24/2018</span>
<span class="t" style="left:221.53px;top:419px;font-size:11px;line-height:13px;color:#000;">A</span>
<span class="t" style="left:254.50px;top:419px;font-size:11px;line-height:13px;color:#000;letter-spacing:-0.330px;">Breathing Problems</span>
<span class="t" style="left:404.50px;top:419px;font-size:11px;line-height:13px;color:#000;letter-spacing:-0.276px;">2906 L…</span>
<span class="t" style="left:521.50px;top:419px;font-size:11px;line-height:13px;color:#000;letter-spacing:-0.088px;">6 EMS party trans by non fire</span>
<span class="t" style="left:34.50px;top:441px;font-size:11px;line-height:13px;color:#000;letter-spacing:-0.022px;">2018-00007113</span>
<span class="t" style="left:125.50px;top:441px;font-size:11px;line-height:13px;color:#000;letter-spacing:-0.007px;">12/24/2018</span>
<span class="t" style="left:221.53px;top:441px;font-size:11px;line-height:13px;color:#000;">A</span>
<span class="t" style="left:254.50px;top:441px;font-size:11px;line-height:13px;color:#000;letter-spacing:-0.272px;">Unconscious/Fainting</span>
<span class="t" style="left:404.50px;top:441px;font-size:11px;line-height:13px;color:#000;letter-spacing:-0.106px;">1009 …</span>
<span class="t" style="left:521.50px;top:441px;font-size:11px;line-height:13px;color:#000;letter-spacing:-0.341px;">3 EMS call excluding vehicle acc</span>
<span class="t" style="left:34.50px;top:463px;font-size:11px;line-height:13px;color:#000;letter-spacing:-0.022px;">2018-00007112</span>
<span class="t" style="left:125.50px;top:463px;font-size:11px;line-height:13px;color:#000;letter-spacing:-0.007px;">12/24/2018</span>
<span class="t" style="left:221.53px;top:463px;font-size:11px;line-height:13px;color:#000;">A</span>
<span class="t" style="left:254.50px;top:463px;font-size:11px;line-height:13px;color:#000;letter-spacing:-0.275px;">Carbon Monoxide</span>
<span class="t" style="left:404.50px;top:463px;font-size:11px;line-height:13px;color:#000;letter-spacing:-0.070px;">306 ID…</span>
<span class="t" style="left:521.50px;top:463px;font-size:11px;line-height:13px;color:#000;letter-spacing:-0.320px;">4 Gas leak natural gas or LPG</span>
<span class="t" style="left:34.50px;top:485px;font-size:11px;line-height:13px;color:#000;letter-spacing:0.046px;">2018-00007111</span>
<span class="t" style="left:125.50px;top:485px;font-size:11px;line-height:13px;color:#000;letter-spacing:-0.007px;">12/24/2018</span>
<span class="t" style="left:221.53px;top:485px;font-size:11px;line-height:13px;color:#000;">A</span>
<span class="t" style="left:254.50px;top:485px;font-size:11px;line-height:13px;color:#000;letter-spacing:-0.150px;transform:scaleX(0.9188);transform-origin:0 0;">Fire</span>
<span class="t" style="left:404.50px;top:485px;font-size:11px;line-height:13px;color:#000;letter-spacing:-0.106px;">3606 …</span>
<span class="t" style="left:456.50px;top:485px;font-size:11px;line-height:13px;color:#000;">B</span>
<span class="t" style="left:521.50px;top:485px;font-size:11px;line-height:13px;color:#000;letter-spacing:-0.068px;">1 Fire, other</span>
<span class="t" style="left:34.50px;top:507px;font-size:11px;line-height:13px;color:#000;letter-spacing:-0.022px;">2018-00007110</span>
<span class="t" style="left:125.50px;top:507px;font-size:11px;line-height:13px;color:#000;letter-spacing:-0.007px;">12/24/2018</span>
<span class="t" style="left:221.53px;top:507px;font-size:11px;line-height:13px;color:#000;">A</span>
<span class="t" style="left:254.50px;top:507px;font-size:11px;line-height:13px;color:#000;letter-spacing:-0.150px;transform:scaleX(0.9564);transform-origin:0 0;">Unknown</span>
<span class="t" style="left:404.50px;top:507px;font-size:11px;line-height:13px;color:#000;letter-spacing:0.056px;">1101 …</span>
<span class="t" style="left:456.50px;top:507px;font-size:11px;line-height:13px;color:#000;letter-spacing:-0.250px;">28</span>
<span class="t" style="left:521.50px;top:507px;font-size:11px;line-height:13px;color:#000;letter-spacing:-0.152px;">6 Dispatched &amp; canceled enroute</span>
<span class="t" style="left:34.50px;top:529px;font-size:11px;line-height:13px;color:#000;letter-spacing:-0.090px;">2018-00007109</span>
<span class="t" style="left:125.50px;top:529px;font-size:11px;line-height:13px;color:#000;letter-spacing:-0.007px;">12/24/2018</span>
<span class="t" style="left:221.53px;top:529px;font-size:11px;line-height:13px;color:#000;">A</span>
<span class="t" style="left:254.50px;top:529px;font-size:11px;line-height:13px;color:#000;letter-spacing:-0.150px;transform:scaleX(0.9564);transform-origin:0 0;">Unknown</span>
<span class="t" style="left:404.50px;top:529px;font-size:11px;line-height:13px;color:#000;letter-spacing:-0.106px;">1400 …</span>
<span class="t" style="left:456.50px;top:529px;font-size:11px;line-height:13px;color:#000;letter-spacing:-0.150px;transform:scaleX(0.9388);transform-origin:0 0;">324 D</span>
<span class="t" style="left:521.50px;top:529px;font-size:11px;line-height:13px;color:#000;letter-spacing:-0.107px;">6 No incident found on arrival</span>
<span class="t" style="left:34.50px;top:551px;font-size:11px;line-height:13px;color:#000;letter-spacing:-0.090px;">2018-00007108</span>
<span class="t" style="left:125.50px;top:551px;font-size:11px;line-height:13px;color:#000;letter-spacing:-0.007px;">12/24/2018</span>
<span class="t" style="left:221.53px;top:551px;font-size:11px;line-height:13px;color:#000;">A</span>
<span class="t" style="left:254.50px;top:551px;font-size:11px;line-height:13px;color:#000;letter-spacing:-0.272px;">Unconscious/Fainting</span>
<span class="t" style="left:404.50px;top:551px;font-size:11px;line-height:13px;color:#000;letter-spacing:0.072px;">709 A…</span>
<span class="t" style="left:521.50px;top:551px;font-size:11px;line-height:13px;color:#000;letter-spacing:-0.235px;">3 Rescue, EMS incident, other</span>
<span class="t" style="left:34.50px;top:573px;font-size:11px;line-height:13px;color:#000;letter-spacing:-0.090px;">2018-00007107</span>
<span class="t" style="left:125.50px;top:573px;font-size:11px;line-height:13px;color:#000;letter-spacing:-0.007px;">12/24/2018</span>
<span class="t" style="left:221.53px;top:573px;font-size:11px;line-height:13px;color:#000;">A</span>
<span class="t" style="left:254.50px;top:573px;font-size:11px;line-height:13px;color:#000;letter-spacing:-0.150px;transform:scaleX(0.8678);transform-origin:0 0;">Fall</span>
<span class="t" style="left:404.50px;top:573px;font-size:11px;line-height:13px;color:#000;letter-spacing:-0.106px;">4070 …</span>
<span class="t" style="left:521.50px;top:573px;font-size:11px;line-height:13px;color:#000;letter-spacing:-0.176px;">5 Public service assistance, oth</span>
<span class="t" style="left:34.50px;top:595px;font-size:11px;line-height:13px;color:#000;letter-spacing:-0.090px;">2018-00007106</span>
<span class="t" style="left:125.50px;top:595px;font-size:11px;line-height:13px;color:#000;letter-spacing:-0.007px;">12/24/2018</span>
<span class="t" style="left:221.53px;top:595px;font-size:11px;line-height:13px;color:#000;">A</span>
<span class="t" style="left:254.50px;top:595px;font-size:11px;line-height:13px;color:#000;letter-spacing:-0.150px;transform:scaleX(0.9564);transform-origin:0 0;">Unknown</span>
<span class="t" style="left:404.50px;top:595px;font-size:11px;line-height:13px;color:#000;letter-spacing:0.153px;">111 C…</span>
<span class="t" style="left:521.50px;top:595px;font-size:11px;line-height:13px;color:#000;letter-spacing:-0.107px;">6 No incident found on arrival</span>
<span class="t" style="left:34.50px;top:617px;font-size:11px;line-height:13px;color:#000;letter-spacing:-0.090px;">2018-00007105</span>
<span class="t" style="left:125.50px;top:617px;font-size:11px;line-height:13px;color:#000;letter-spacing:-0.007px;">12/24/2018</span>
<span class="t" style="left:221.53px;top:617px;font-size:11px;line-height:13px;color:#000;">A</span>
<span class="t" style="left:254.50px;top:617px;font-size:11px;line-height:13px;color:#000;letter-spacing:-0.347px;">Fire Alarm</span>
<span class="t" style="left:404.50px;top:617px;font-size:11px;line-height:13px;color:#000;letter-spacing:-0.106px;">1807 …</span>
<span class="t" style="left:521.50px;top:617px;font-size:11px;line-height:13px;color:#000;letter-spacing:-0.107px;">6 No incident found on arrival</span>
<span class="t" style="left:34.50px;top:639px;font-size:11px;line-height:13px;color:#000;letter-spacing:-0.090px;">2018-00007104</span>
<span class="t" style="left:125.50px;top:639px;font-size:11px;line-height:13px;color:#000;letter-spacing:-0.007px;">12/24/2018</span>
<span class="t" style="left:221.53px;top:639px;font-size:11px;line-height:13px;color:#000;">A</span>
<span class="t" style="left:254.50px;top:639px;font-size:11px;line-height:13px;color:#000;letter-spacing:-0.040px;">Accident w/Injuries</span>
<span class="t" style="left:404.00px;top:639px;font-size:11px;line-height:13px;color:#000;letter-spacing:-0.150px;transform:scaleX(0.9707);transform-origin:0 0;">DESIA…</span>
<span class="t" style="left:521.50px;top:639px;font-size:11px;line-height:13px;color:#000;letter-spacing:-0.088px;">6 EMS party trans by non fire</span>
<span class="t" style="left:34.50px;top:661px;font-size:11px;line-height:13px;color:#000;letter-spacing:-0.090px;">2018-00007103</span>
<span class="t" style="left:125.50px;top:661px;font-size:11px;line-height:13px;color:#000;letter-spacing:-0.007px;">12/24/2018</span>
<span class="t" style="left:221.53px;top:661px;font-size:11px;line-height:13px;color:#000;">A</span>
<span class="t" style="left:254.50px;top:661px;font-size:11px;line-height:13px;color:#000;letter-spacing:-0.131px;">Cardiac Arrest</span>
<span class="t" style="left:404.50px;top:661px;font-size:11px;line-height:13px;color:#000;letter-spacing:-0.072px;">230 D…</span>
<span class="t" style="left:456.50px;top:661px;font-size:11px;line-height:13px;color:#000;letter-spacing:-0.180px;">142</span>
<span class="t" style="left:521.50px;top:661px;font-size:11px;line-height:13px;color:#000;letter-spacing:-0.088px;">6 EMS party trans by non fire</span>
<span class="t" style="left:34.50px;top:683px;font-size:11px;line-height:13px;color:#000;letter-spacing:-0.090px;">2018-00007102</span>
<span class="t" style="left:125.50px;top:683px;font-size:11px;line-height:13px;color:#000;letter-spacing:-0.007px;">12/24/2018</span>
<span class="t" style="left:221.53px;top:683px;font-size:11px;line-height:13px;color:#000;">A</span>
<span class="t" style="left:254.50px;top:683px;font-size:11px;line-height:13px;color:#000;letter-spacing:-0.150px;transform:scaleX(0.9342);transform-origin:0 0;">Seizures</span>
<span class="t" style="left:404.50px;top:683px;font-size:11px;line-height:13px;color:#000;letter-spacing:0.056px;">1101 …</span>
<span class="t" style="left:456.50px;top:683px;font-size:11px;line-height:13px;color:#000;letter-spacing:-0.180px;">196</span>
<span class="t" style="left:521.50px;top:683px;font-size:11px;line-height:13px;color:#000;letter-spacing:-0.096px;">6 Good intent call, other</span>
<span class="t" style="left:804.00px;top:683px;font-size:11px;line-height:13px;color:#000;letter-spacing:-0.150px;transform:scaleX(0.9124);transform-origin:0 0;">FIRST ENGINE RESPONSE TIME MORE 320 SECONDS.</span>
<span class="t" style="left:34.50px;top:705px;font-size:11px;line-height:13px;color:#000;letter-spacing:-0.090px;">2018-00007101</span>
<span class="t" style="left:125.50px;top:705px;font-size:11px;line-height:13px;color:#000;letter-spacing:-0.007px;">12/24/2018</span>
<span class="t" style="left:221.53px;top:705px;font-size:11px;line-height:13px;color:#000;">A</span>
<span class="t" style="left:254.50px;top:705px;font-size:11px;line-height:13px;color:#000;letter-spacing:-0.150px;transform:scaleX(0.9663);transform-origin:0 0;">Stroke</span>
<span class="t" style="left:404.50px;top:705px;font-size:11px;line-height:13px;color:#000;letter-spacing:-0.219px;">800 S …</span>
<span class="t" style="left:521.50px;top:705px;font-size:11px;line-height:13px;color:#000;letter-spacing:-0.088px;">6 EMS party trans by non fire</span>
<span class="t" style="left:34.50px;top:727px;font-size:11px;line-height:13px;color:#000;letter-spacing:-0.090px;">2018-00007100</span>
<span class="t" style="left:125.50px;top:727px;font-size:11px;line-height:13px;color:#000;letter-spacing:-0.007px;">12/24/2018</span>
<span class="t" style="left:221.53px;top:727px;font-size:11px;line-height:13px;color:#000;">A</span>
<span class="t" style="left:254.50px;top:727px;font-size:11px;line-height:13px;color:#000;letter-spacing:-0.150px;transform:scaleX(0.9265);transform-origin:0 0;">Sick Person</span>
<span class="t" style="left:404.50px;top:727px;font-size:11px;line-height:13px;color:#000;letter-spacing:-0.106px;">1401 …</span>
<span class="t" style="left:521.50px;top:727px;font-size:11px;line-height:13px;color:#000;letter-spacing:-0.341px;">3 EMS call excluding vehicle acc</span>
<span class="t" style="left:804.00px;top:727px;font-size:11px;line-height:13px;color:#000;letter-spacing:-0.150px;transform:scaleX(0.9124);transform-origin:0 0;">FIRST ENGINE RESPONSE TIME MORE 320 SECONDS.</span>
<span class="t" style="left:34.50px;top:749px;font-size:11px;line-height:13px;color:#000;letter-spacing:-0.090px;">2018-00007099</span>
<span class="t" style="left:125.50px;top:749px;font-size:11px;line-height:13px;color:#000;letter-spacing:-0.007px;">12/24/2018</span>
<span class="t" style="left:221.53px;top:749px;font-size:11px;line-height:13px;color:#000;">A</span>
<span class="t" style="left:254.50px;top:749px;font-size:11px;line-height:13px;color:#000;letter-spacing:-0.150px;transform:scaleX(0.9564);transform-origin:0 0;">Unknown</span>
<span class="t" style="left:404.50px;top:749px;font-size:11px;line-height:13px;color:#000;letter-spacing:-0.194px;">30 LO…</span>
<span class="t" style="left:456.50px;top:749px;font-size:11px;line-height:13px;color:#000;">A</span>
<span class="t" style="left:521.50px;top:749px;font-size:11px;line-height:13px;color:#000;letter-spacing:-0.088px;">6 EMS party trans by non fire</span>
<span class="t" style="left:34.50px;top:771px;font-size:11px;line-height:13px;color:#000;letter-spacing:-0.090px;">2018-00007098</span>
<span class="t" style="left:125.50px;top:771px;font-size:11px;line-height:13px;color:#000;letter-spacing:-0.007px;">12/24/2018</span>
<span class="t" style="left:221.53px;top:771px;font-size:11px;line-height:13px;color:#000;">A</span>
<span class="t" style="left:254.50px;top:771px;font-size:11px;line-height:13px;color:#000;letter-spacing:-0.330px;">Breathing Problems</span>
<span class="t" style="left:404.50px;top:771px;font-size:11px;line-height:13px;color:#000;letter-spacing:-0.106px;">1207 …</span>
<span class="t" style="left:521.50px;top:771px;font-size:11px;line-height:13px;color:#000;letter-spacing:-0.107px;">6 No incident found on arrival</span>
<span class="t" style="left:804.00px;top:771px;font-size:11px;line-height:13px;color:#000;letter-spacing:-0.150px;transform:scaleX(0.9124);transform-origin:0 0;">FIRST ENGINE RESPONSE TIME MORE 320 SECONDS.</span>
<span class="t" style="left:34.50px;top:793px;font-size:11px;line-height:13px;color:#000;letter-spacing:-0.090px;">2018-00007097</span>
<span class="t" style="left:125.50px;top:793px;font-size:11px;line-height:13px;color:#000;letter-spacing:-0.007px;">12/24/2018</span>
<span class="t" style="left:221.22px;top:793px;font-size:11px;line-height:13px;color:#000;">C</span>
<span class="t" style="left:254.50px;top:793px;font-size:11px;line-height:13px;color:#000;letter-spacing:-0.330px;">Breathing Problems</span>
<span class="t" style="left:404.50px;top:793px;font-size:11px;line-height:13px;color:#000;letter-spacing:-0.106px;">2401 …</span>
<span class="t" style="left:456.50px;top:793px;font-size:11px;line-height:13px;color:#000;letter-spacing:-0.180px;">634</span>
<span class="t" style="left:804.00px;top:793px;font-size:11px;line-height:13px;color:#000;letter-spacing:-0.150px;transform:scaleX(0.9124);transform-origin:0 0;">FIRST ENGINE RESPONSE TIME MORE 320 SECONDS.</span>
<span class="t" style="left:34.50px;top:815px;font-size:11px;line-height:13px;color:#000;letter-spacing:-0.090px;">2018-00007096</span>
<span class="t" style="left:125.50px;top:815px;font-size:11px;line-height:13px;color:#000;letter-spacing:-0.007px;">12/24/2018</span>
<span class="t" style="left:221.22px;top:815px;font-size:11px;line-height:13px;color:#000;">C</span>
<span class="t" style="left:254.50px;top:815px;font-size:11px;line-height:13px;color:#000;letter-spacing:-0.150px;transform:scaleX(0.9443);transform-origin:0 0;">Assist</span>
<span class="t" style="left:404.50px;top:815px;font-size:11px;line-height:13px;color:#000;letter-spacing:-0.106px;">1508 …</span>
<span class="t" style="left:521.50px;top:815px;font-size:11px;line-height:13px;color:#000;letter-spacing:-0.176px;">5 Public service assistance, oth</span>
<span class="t" style="left:804.00px;top:815px;font-size:11px;line-height:13px;color:#000;letter-spacing:-0.150px;transform:scaleX(0.9124);transform-origin:0 0;">FIRST ENGINE RESPONSE TIME MORE 320 SECONDS.</span>
<span class="t" style="left:877.00px;top:852px;font-size:11px;line-height:13px;color:#000;letter-spacing:0.185px;">Loading the First 500 Incidents</span>
<span class="t" style="left:1059.50px;top:850px;font-size:11px;line-height:13px;color:#000;letter-spacing:0.263px;">Load All</span>
<span class="t" style="left:1135.00px;top:850px;font-size:11px;line-height:13px;color:#000;letter-spacing:0.176px;">Load More</span>
<span class="t" style="left:28.00px;top:876px;font-size:11px;line-height:13px;color:#000;letter-spacing:0.153px;">Use These Filters To Narrow The Incidents</span>
<span class="t" style="left:35.50px;top:901px;font-size:11px;line-height:13px;color:#000;letter-spacing:-0.024px;">Date Range</span>
<span class="t" style="left:263.50px;top:901px;font-size:11px;line-height:13px;color:#000;letter-spacing:-0.031px;">NFPA 1710 Compliance</span>
<span class="t" style="left:418.50px;top:901px;font-size:11px;line-height:13px;color:#000;letter-spacing:0.234px;">Incident Detail</span>
<span class="t" style="left:72.00px;top:930px;font-size:11px;line-height:13px;color:#6d6d6d;">From Date</span>
<span class="t" style="left:142.50px;top:931px;font-size:11px;line-height:13px;color:#6d6d6d;letter-spacing:-0.049px;">1/  1/2022</span>
<span class="t" style="left:72.00px;top:957px;font-size:11px;line-height:13px;color:#6d6d6d;letter-spacing:0.180px;">To Date</span>
<span class="t" style="left:136.50px;top:955px;font-size:11px;line-height:13px;color:#6d6d6d;letter-spacing:-0.062px;">12/31/2022</span>
<span class="t" style="left:290.00px;top:923px;font-size:11px;line-height:13px;color:#000;letter-spacing:-0.117px;">All</span>
<span class="t" style="left:290.50px;top:942px;font-size:11px;line-height:13px;color:#000;letter-spacing:0.061px;">Compliant Only</span>
<span class="t" style="left:290.50px;top:962px;font-size:11px;line-height:13px;color:#000;letter-spacing:0.115px;">Non-Compliant Only</span>
<span class="t" style="left:451.50px;top:930px;font-size:11px;line-height:13px;color:#6d6d6d;letter-spacing:0.199px;">Incident Number</span>
<span class="t" style="left:451.50px;top:955px;font-size:11px;line-height:13px;color:#6d6d6d;letter-spacing:0.230px;">Incident Type</span>
<span class="t" style="left:542.50px;top:954px;font-size:11px;line-height:13px;color:#6d6d6d;letter-spacing:0.040px;">911 Investigation</span>
<span class="t" style="left:734.00px;top:930px;font-size:11px;line-height:13px;color:#6d6d6d;letter-spacing:-0.143px;">Address</span>
<span class="t" style="left:734.00px;top:954px;font-size:11px;line-height:13px;color:#6d6d6d;">Shift</span>
<span class="t" style="left:971.00px;top:912px;font-size:11px;line-height:13px;color:#000;letter-spacing:0.503px;">Update</span>
<span class="t" style="left:978.00px;top:942px;font-size:11px;line-height:13px;color:#000;letter-spacing:-0.074px;">Clear</span>
</body></html>
